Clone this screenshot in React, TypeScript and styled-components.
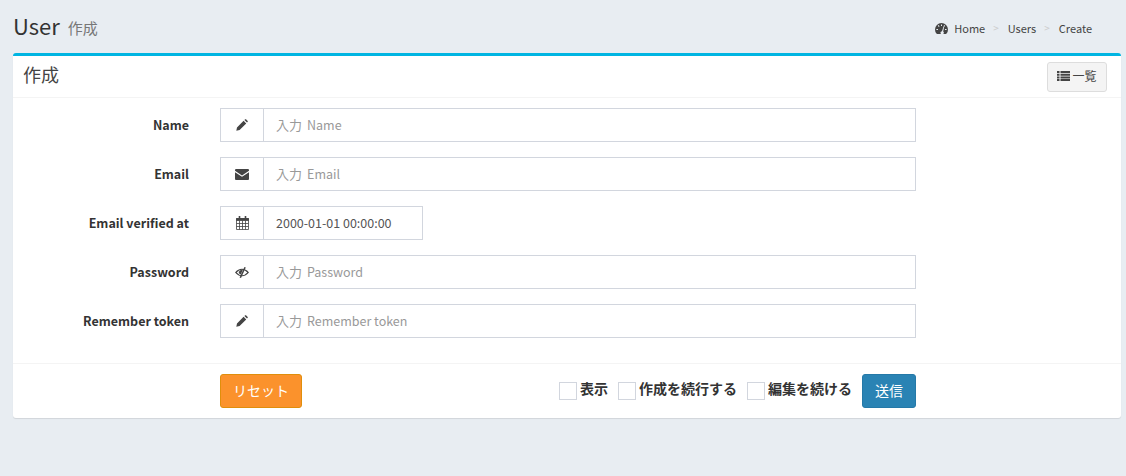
import React from "react";
import styled, { createGlobalStyle } from "styled-components";

const Global = createGlobalStyle`
  html, body { margin: 0; padding: 0; background: #e8edf2; }
  body { font-family: "Noto Sans CJK JP", "Noto Sans", sans-serif; color: #333; }
  * { box-sizing: border-box; }
`;

const Page = styled.div`
  width: 1126px;
  height: 476px;
  padding: 0 5px 0 13px;
  overflow: hidden;
`;
const Header = styled.div`
  height: 53px;
  display: flex;
  align-items: flex-start;
  justify-content: space-between;
  padding-top: 12px;
`;
const Title = styled.h1`
  margin: 0;
  height: 26px;
  font-size: 22px;
  line-height: 26px;
  font-weight: 400;
  color: #333;
  display: flex;
  align-items: center;
  gap: 8px;
`;
const Small = styled.small`
  font-size: 15px;
  line-height: 26px;
  margin-top: 6px;
  color: #777;
`;
const Crumbs = styled.ol`
  list-style: none;
  margin: 0;
  padding: 8px 29px 0 0;
  display: flex;
  align-items: center;
  font-size: 11px;
  line-height: 16px;
  color: #444;
`;
const Crumb = styled.li`
  display: flex;
  align-items: center;
  gap: 6px;
  & + &::before {
    content: ">";
    color: #ccc;
    margin: 0 3px 0 8px;
    font-size: 10px;
  }
`;
const Box = styled.div`
  width: 1108px;
  background: #fff;
  border-top: 3px solid #00b5e2;
  border-radius: 3px;
  box-shadow: 0 1px 1px rgba(0, 0, 0, 0.1);
`;
const BoxHeader = styled.div`
  height: 42px;
  padding: 0 14px 0 10px;
  display: flex;
  align-items: center;
  justify-content: space-between;
  border-bottom: 1px solid #f4f4f4;
`;
const BoxTitle = styled.h3`
  margin: 0;
  padding-bottom: 6px;
  font-size: 18px;
  font-weight: 400;
  color: #444;
`;
const ListButton = styled.button`
  width: 60px;
  height: 30px;
  display: flex;
  align-items: center;
  justify-content: center;
  gap: 2px;
  font: inherit;
  font-size: 12px;
  color: #444;
  background: #f4f4f4;
  border: 1px solid #ddd;
  border-radius: 3px;
  padding: 0 0 2px;
`;
const Form = styled.div`
  padding: 10px 0 10px;
  border-bottom: 1px solid #f4f4f4;
`;
const Row = styled.div`
  display: flex;
  align-items: center;
  height: 34px;
  margin-bottom: 15px;
`;
const Label = styled.label`
  width: 176px;
  padding-bottom: 1px;
  text-align: right;
  font-size: 12.5px;
  font-weight: 700;
  color: #333;
  margin-right: 31px;
`;
const InputGroup = styled.div<{ $w: number }>`
  width: ${(p) => p.$w}px;
  height: 34px;
  display: flex;
  border: 1px solid #d2d6de;
  background: #fff;
`;
const Addon = styled.span`
  width: 43px;
  flex: none;
  display: flex;
  align-items: center;
  justify-content: center;
  border-right: 1px solid #d2d6de;
  color: #444;
`;
const Field = styled.span<{ $filled?: boolean }>`
  flex: 1;
  display: flex;
  align-items: center;
  padding: 0 0 2px 12px;
  font-size: 12.5px;
  color: ${(p) => (p.$filled ? "#555" : "#999")};
`;
const Hint = styled.span`
  font-size: 13px;
  margin-right: 5px;
`;
const Footer = styled.div`
  height: 54px;
  padding: 10px 205px 0 207px;
  display: flex;
  align-items: flex-start;
  justify-content: space-between;
`;
const Reset = styled.button`
  width: 82px;
  height: 34px;
  font: inherit;
  font-size: 14px;
  color: #fff;
  background: #fb922c;
  border: 1px solid #e08e0b;
  border-radius: 3px;
  padding: 0 0 2px;
`;
const Right = styled.div`
  display: flex;
  align-items: flex-start;
`;
const Check = styled.label`
  display: flex;
  align-items: center;
  gap: 3px;
  margin: 5px 10px 0 0;
  height: 18px;
  font-size: 14px;
  font-weight: 700;
  color: #333;
`;
const Square = styled.span`
  width: 18px;
  height: 18px;
  border: 1px solid #d2d6de;
  background: #fff;
  transform: translateY(3px);
`;
const Submit = styled.button`
  width: 54px;
  height: 34px;
  font: inherit;
  font-size: 14px;
  color: #fff;
  background: #2a83b4;
  border: 1px solid #2579a8;
  border-radius: 3px;
  padding: 0 0 2px;
`;

const Pencil = () => (
  <svg width="12" height="12" viewBox="0 0 12 12" fill="currentColor">
    <path d="M0.3 11.7 L1 8.4 L7.6 1.8 L10.2 4.4 L3.6 11 Z M8.4 1 L9.2 0.3 Q9.6 0 10 0.3 L11.7 2 Q12 2.4 11.7 2.8 L11 3.6 Z" />
  </svg>
);
const Envelope = () => (
  <svg width="14" height="11" viewBox="0 0 14 11" fill="currentColor">
    <path d="M1 0 H13 Q14 0 14 1.2 V1.8 L7 6.4 L0 1.8 V1.2 Q0 0 1 0 Z" />
    <path d="M0 3.2 L7 7.8 L14 3.2 V10 Q14 11 13 11 H1 Q0 11 0 10 Z" />
  </svg>
);
const Calendar = () => (
  <svg width="13" height="14" viewBox="0 0 13 14" fill="none" stroke="currentColor" strokeWidth="0.8">
    <path d="M0.5 2.5 H12.5 V13.5 H0.5 Z M0.5 7.5 H12.5 M0.5 10.5 H12.5 M3.5 4.5 V13.5 M6.5 4.5 V13.5 M9.5 4.5 V13.5" />
    <path d="M0.5 2.5 H12.5 V4.5 H0.5 Z" fill="currentColor" />
    <path d="M3.5 0 V3 M9.5 0 V3" strokeWidth="1.6" />
  </svg>
);
const EyeSlash = () => (
  <svg width="14" height="11" viewBox="0 0 14 11" fill="currentColor">
    <path
      fillRule="evenodd"
      d="M0 5.5 Q3 1.8 7 1.8 Q11 1.8 14 5.5 Q11 9.2 7 9.2 Q3 9.2 0 5.5 Z M1.7 5.5 Q4 8.2 7 8.2 Q10 8.2 12.3 5.5 Q10 2.8 7 2.8 Q4 2.8 1.7 5.5 Z"
    />
    <path d="M3.6 5 Q4.8 2.6 8 2.4 L5.8 7.6 Q4 7 3.6 5 Z" />
    <path d="M9.4 0 L10.8 0.6 L6 11 L4.6 10.4 Z" />
  </svg>
);
const Gauge = () => (
  <svg width="13" height="11" viewBox="0 0 13 11" fill="currentColor">
    <path
      fillRule="evenodd"
      d="M6.5 0 A6.5 6.5 0 0 1 13 6.5 Q13 8.8 11.6 10.6 Q11.3 11 10.8 11 H2.2 Q1.7 11 1.4 10.6 Q0 8.8 0 6.5 A6.5 6.5 0 0 1 6.5 0 Z M6 1.4 H7 V3 H6 Z M2.8 2.8 L3.6 2.1 L4.6 3.2 L3.8 3.9 Z M1.4 6 H3 V7 H1.4 Z M10 6 H11.6 V7 H10 Z M8.4 3.2 L9.3 2.1 L10.1 2.8 L9.2 3.9 Z M7 8.2 L8.4 3.8 L9.1 4 L8.2 8.6 A1.6 1.6 0 1 1 7 8.2 Z"
    />
  </svg>
);
const ListIcon = () => (
  <svg width="13" height="10" viewBox="0 0 13 10" fill="currentColor">
    <path d="M0 0 H2.5 V2 H0 Z M3.5 0 H13 V2 H3.5 Z M0 2.7 H2.5 V4.7 H0 Z M3.5 2.7 H13 V4.7 H3.5 Z M0 5.4 H2.5 V7.4 H0 Z M3.5 5.4 H13 V7.4 H3.5 Z M0 8 H2.5 V10 H0 Z M3.5 8 H13 V10 H3.5 Z" />
  </svg>
);

const rows = [
  { label: "Name", icon: <Pencil />, hint: "入力", text: "Name", w: 696 },
  { label: "Email", icon: <Envelope />, hint: "入力", text: "Email", w: 696 },
  { label: "Email verified at", icon: <Calendar />, text: "2000-01-01 00:00:00", w: 203, filled: true },
  { label: "Password", icon: <EyeSlash />, hint: "入力", text: "Password", w: 696 },
  { label: "Remember token", icon: <Pencil />, hint: "入力", text: "Remember token", w: 696 },
];

export default function App() {
  return (
    <Page>
      <Global />
      <Header>
        <Title>
          User <Small>作成</Small>
        </Title>
        <Crumbs>
          <Crumb>
            <Gauge /> Home
          </Crumb>
          <Crumb>Users</Crumb>
          <Crumb>Create</Crumb>
        </Crumbs>
      </Header>
      <Box>
        <BoxHeader>
          <BoxTitle>作成</BoxTitle>
          <ListButton>
            <ListIcon />
            一覧
          </ListButton>
        </BoxHeader>
        <Form>
          {rows.map((r) => (
            <Row key={r.label}>
              <Label>{r.label}</Label>
              <InputGroup $w={r.w}>
                <Addon>{r.icon}</Addon>
                <Field $filled={r.filled}>
                  {r.hint && <Hint>{r.hint}</Hint>}
                  {r.text}
                </Field>
              </InputGroup>
            </Row>
          ))}
        </Form>
        <Footer>
          <Reset>リセット</Reset>
          <Right>
            <Check>
              <Square />
              表示
            </Check>
            <Check>
              <Square />
              作成を続行する
            </Check>
            <Check>
              <Square />
              編集を続ける
            </Check>
            <Submit>送信</Submit>
          </Right>
        </Footer>
      </Box>
    </Page>
  );
}
